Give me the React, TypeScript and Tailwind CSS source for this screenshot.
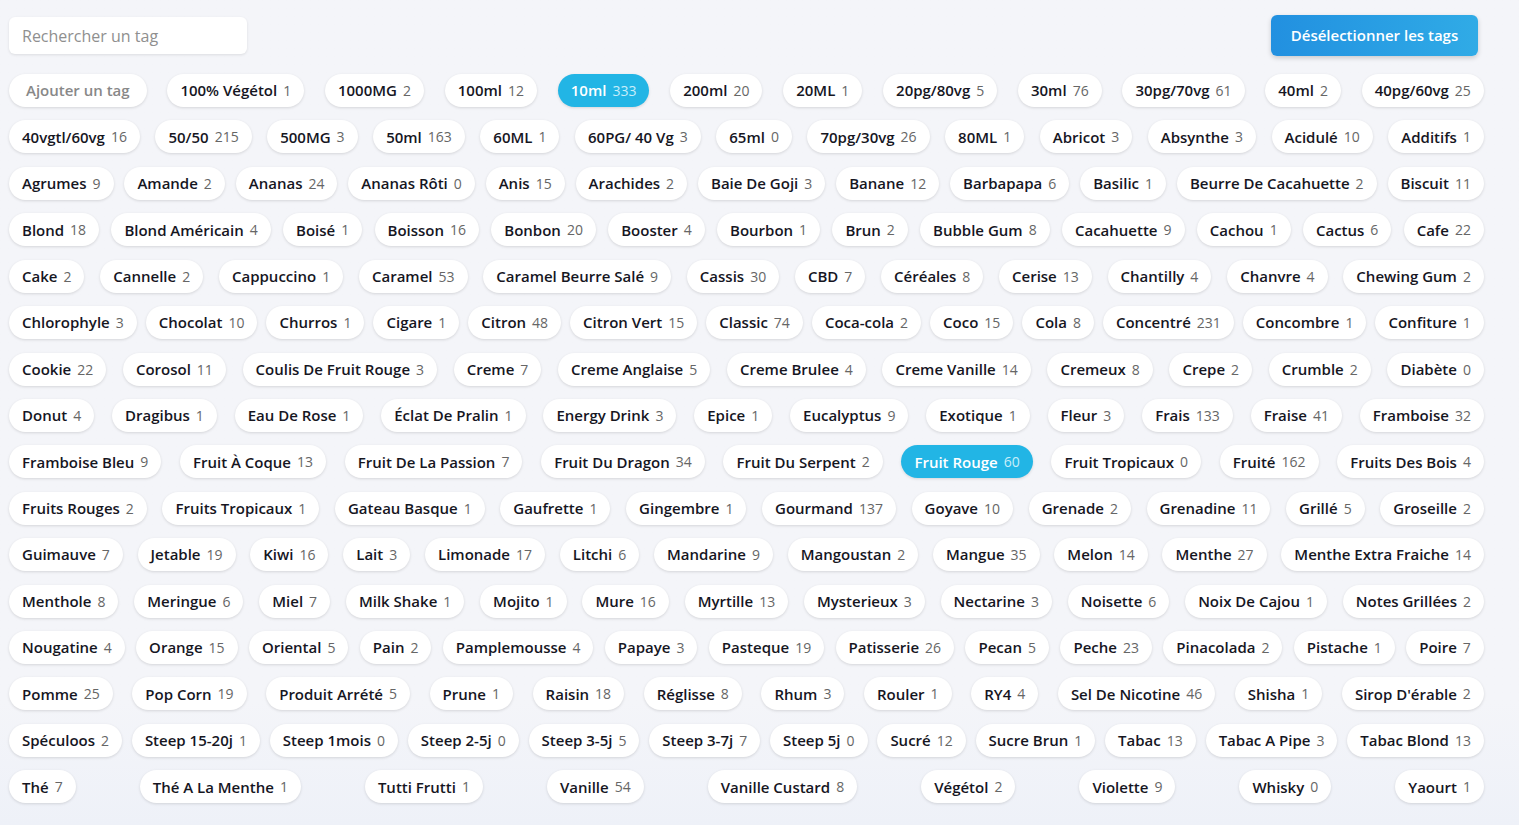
import React from 'react';

type Tag = [string, number?];

const rows: Tag[][] = [
  [['Ajouter un tag'], ['100% Végétol', 1], ['1000MG', 2], ['100ml', 12], ['10ml', 333], ['200ml', 20], ['20ML', 1], ['20pg/80vg', 5], ['30ml', 76], ['30pg/70vg', 61], ['40ml', 2], ['40pg/60vg', 25]],
  [['40vgtl/60vg', 16], ['50/50', 215], ['500MG', 3], ['50ml', 163], ['60ML', 1], ['60PG/ 40 Vg', 3], ['65ml', 0], ['70pg/30vg', 26], ['80ML', 1], ['Abricot', 3], ['Absynthe', 3], ['Acidulé', 10], ['Additifs', 1]],
  [['Agrumes', 9], ['Amande', 2], ['Ananas', 24], ['Ananas Rôti', 0], ['Anis', 15], ['Arachides', 2], ['Baie De Goji', 3], ['Banane', 12], ['Barbapapa', 6], ['Basilic', 1], ['Beurre De Cacahuette', 2], ['Biscuit', 11]],
  [['Blond', 18], ['Blond Américain', 4], ['Boisé', 1], ['Boisson', 16], ['Bonbon', 20], ['Booster', 4], ['Bourbon', 1], ['Brun', 2], ['Bubble Gum', 8], ['Cacahuette', 9], ['Cachou', 1], ['Cactus', 6], ['Cafe', 22]],
  [['Cake', 2], ['Cannelle', 2], ['Cappuccino', 1], ['Caramel', 53], ['Caramel Beurre Salé', 9], ['Cassis', 30], ['CBD', 7], ['Céréales', 8], ['Cerise', 13], ['Chantilly', 4], ['Chanvre', 4], ['Chewing Gum', 2]],
  [['Chlorophyle', 3], ['Chocolat', 10], ['Churros', 1], ['Cigare', 1], ['Citron', 48], ['Citron Vert', 15], ['Classic', 74], ['Coca-cola', 2], ['Coco', 15], ['Cola', 8], ['Concentré', 231], ['Concombre', 1], ['Confiture', 1]],
  [['Cookie', 22], ['Corosol', 11], ['Coulis De Fruit Rouge', 3], ['Creme', 7], ['Creme Anglaise', 5], ['Creme Brulee', 4], ['Creme Vanille', 14], ['Cremeux', 8], ['Crepe', 2], ['Crumble', 2], ['Diabète', 0]],
  [['Donut', 4], ['Dragibus', 1], ['Eau De Rose', 1], ['Éclat De Pralin', 1], ['Energy Drink', 3], ['Epice', 1], ['Eucalyptus', 9], ['Exotique', 1], ['Fleur', 3], ['Frais', 133], ['Fraise', 41], ['Framboise', 32]],
  [['Framboise Bleu', 9], ['Fruit À Coque', 13], ['Fruit De La Passion', 7], ['Fruit Du Dragon', 34], ['Fruit Du Serpent', 2], ['Fruit Rouge', 60], ['Fruit Tropicaux', 0], ['Fruité', 162], ['Fruits Des Bois', 4]],
  [['Fruits Rouges', 2], ['Fruits Tropicaux', 1], ['Gateau Basque', 1], ['Gaufrette', 1], ['Gingembre', 1], ['Gourmand', 137], ['Goyave', 10], ['Grenade', 2], ['Grenadine', 11], ['Grillé', 5], ['Groseille', 2]],
  [['Guimauve', 7], ['Jetable', 19], ['Kiwi', 16], ['Lait', 3], ['Limonade', 17], ['Litchi', 6], ['Mandarine', 9], ['Mangoustan', 2], ['Mangue', 35], ['Melon', 14], ['Menthe', 27], ['Menthe Extra Fraiche', 14]],
  [['Menthole', 8], ['Meringue', 6], ['Miel', 7], ['Milk Shake', 1], ['Mojito', 1], ['Mure', 16], ['Myrtille', 13], ['Mysterieux', 3], ['Nectarine', 3], ['Noisette', 6], ['Noix De Cajou', 1], ['Notes Grillées', 2]],
  [['Nougatine', 4], ['Orange', 15], ['Oriental', 5], ['Pain', 2], ['Pamplemousse', 4], ['Papaye', 3], ['Pasteque', 19], ['Patisserie', 26], ['Pecan', 5], ['Peche', 23], ['Pinacolada', 2], ['Pistache', 1], ['Poire', 7]],
  [['Pomme', 25], ['Pop Corn', 19], ['Produit Arrété', 5], ['Prune', 1], ['Raisin', 18], ['Réglisse', 8], ['Rhum', 3], ['Rouler', 1], ['RY4', 4], ['Sel De Nicotine', 46], ['Shisha', 1], ["Sirop D'érable", 2]],
  [['Spéculoos', 2], ['Steep 15-20j', 1], ['Steep 1mois', 0], ['Steep 2-5j', 0], ['Steep 3-5j', 5], ['Steep 3-7j', 7], ['Steep 5j', 0], ['Sucré', 12], ['Sucre Brun', 1], ['Tabac', 13], ['Tabac A Pipe', 3], ['Tabac Blond', 13]],
  [['Thé', 7], ['Thé A La Menthe', 1], ['Tutti Frutti', 1], ['Vanille', 54], ['Vanille Custard', 8], ['Végétol', 2], ['Violette', 9], ['Whisky', 0], ['Yaourt', 1]],
];

const selected = ['10ml', 'Fruit Rouge'];

function TagPill({ name, count }: { name: string; count?: number }) {
  const active = selected.includes(name);
  if (count === undefined) {
    return (
      <span className="h-[33px] px-[17px] flex items-center rounded-full bg-white text-[15px] font-semibold text-[#888] shadow-[0_1px_3px_rgba(0,0,0,0.13)]">
        {name}
      </span>
    );
  }
  return (
    <span
      className={
        active
          ? 'h-[33px] px-[13px] flex items-center rounded-full bg-[#22b5e5] text-[15px] shadow-[0_1px_3px_rgba(0,0,0,0.13)]'
          : 'h-[33px] px-[13px] flex items-center rounded-full bg-white text-[15px] shadow-[0_1px_3px_rgba(0,0,0,0.13)]'
      }
    >
      <span className={active ? 'font-semibold text-white' : 'font-semibold text-[#16161f]'}>{name}</span>
      <span className={active ? 'ml-[6px] text-[14px] text-[#c8eefa]' : 'ml-[6px] text-[14px] text-[#666]'}>{count}</span>
    </span>
  );
}

export default function App() {
  return (
    <div
      className="min-h-[825px] bg-gradient-to-b from-[#f4f5f9] from-85% to-[#eef1f8] pl-[9px] pr-[35px] pt-[15px]"
      style={{ fontFamily: '"Open Sans", "Noto Sans", sans-serif' }}
    >
      <div className="flex items-start justify-between">
        <input
          className="mt-[2px] h-[37px] w-[238px] rounded-md bg-white px-[13px] text-[16px] text-[#333] placeholder:text-[#8f8f8f] shadow-[0_1px_3px_rgba(0,0,0,0.1)] outline-none"
          placeholder="Rechercher un tag"
        />
        <button className="mr-[6px] h-[41px] w-[207px] rounded-md bg-gradient-to-r from-[#2290e0] to-[#30abe6] text-[15px] font-semibold text-white shadow-[0_2px_5px_rgba(0,0,0,0.18)]">
          Désélectionner les tags
        </button>
      </div>
      <div className="mt-[18px] flex flex-col gap-y-[13.43px]">
        {rows.map((row, i) => (
          <div key={i} className="flex justify-between">
            {row.map(([name, count]) => (
              <TagPill key={name} name={name} count={count} />
            ))}
          </div>
        ))}
      </div>
    </div>
  );
}
